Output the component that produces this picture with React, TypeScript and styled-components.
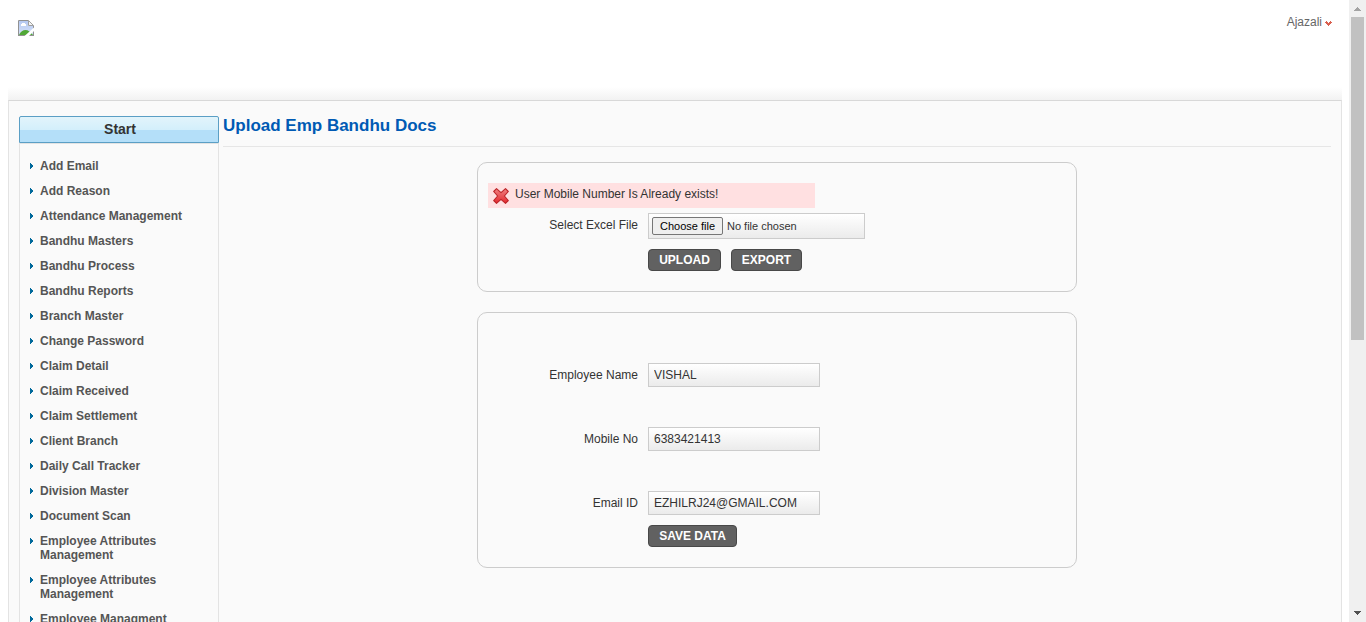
import React from "react";
import styled, { createGlobalStyle } from "styled-components";

const GlobalStyle = createGlobalStyle`
  * { box-sizing: border-box; }
  html, body { margin: 0; padding: 0; background: #fff; overflow: hidden; }
  body, input, button {
    font-family: "Liberation Sans", Arial, Helvetica, sans-serif;
    font-size: 12px;
  }
  body { color: #333; line-height: 14px; }
`;

const Window = styled.div`
  display: flex;
  height: 622px;
  overflow: hidden;
`;

const Page = styled.div`
  flex: 1;
  min-width: 0;
  display: flex;
  flex-direction: column;
  padding: 0 7px 0 8px;
`;

const Header = styled.header`
  flex: none;
  display: flex;
  justify-content: space-between;
  align-items: flex-start;
  height: 100px;
  padding: 15px 10px 0;
  background: linear-gradient(#fff, #f2f2f2) bottom / 100% 13px no-repeat;
`;

const Logo = styled.svg`
  display: block;
  margin-top: 5px;
`;

const UserMenu = styled.div`
  display: flex;
  align-items: center;
  gap: 3px;
  color: #666;

  svg { margin-top: 2px; }
`;

const Body = styled.div`
  flex: 1;
  min-height: 0;
  display: flex;
  gap: 4px;
  padding: 15px 10px 0;
  background: #fafafa;
  border: 1px solid #e3e3e3;
  border-top-color: #d8d8d8;
  border-bottom: 0;
`;

const Sidebar = styled.nav`
  flex: none;
  width: 200px;
  display: flex;
  flex-direction: column;
`;

const StartTitle = styled.div`
  flex: none;
  height: 27px;
  padding-left: 2px;
  border: 1px solid #5b9fc5;
  border-radius: 2px 2px 0 0;
  background: linear-gradient(#e2f4fb 0, #d3effb 13px, #b4dff9 13px, #b4dff9 100%);
  color: #333;
  font-size: 14px;
  font-weight: bold;
  line-height: 25px;
  text-align: center;
`;

const MenuList = styled.ul`
  flex: 1;
  display: flex;
  flex-direction: column;
  gap: 11px;
  margin: 0;
  padding: 15px 10px 0;
  list-style: none;
  border: 1px solid #e3e3e3;
  border-bottom: 0;
`;

const MenuItem = styled.li`
  flex: none;
  display: flex;
  align-items: flex-start;
  gap: 7px;
  color: #555;
  font-weight: bold;

  svg { flex: none; margin-top: 4px; }
`;

const Content = styled.main`
  flex: 1;
  min-width: 0;
`;

const Title = styled.h1`
  height: 31px;
  margin: 0 0 15px;
  border-bottom: 1px solid #e6e6e6;
  color: #005ab4;
  font-size: 17px;
  font-weight: bold;
  line-height: 19px;
`;

const Panel = styled.section<{ $height: number; $top: number }>`
  width: 600px;
  height: ${(p) => p.$height}px;
  margin: 0 auto 20px;
  padding: ${(p) => p.$top}px 10px 0;
  border: 1px solid #ccc;
  border-radius: 10px;
`;

const ErrorMessage = styled.div`
  display: flex;
  align-items: flex-start;
  gap: 6px;
  width: 327px;
  height: 25px;
  margin-bottom: 5px;
  padding: 4px 5px;
  background: #ffe0e1;

  svg { margin-top: 1px; }
`;

const Field = styled.div<{ $after: number }>`
  display: flex;
  gap: 10px;
  margin-bottom: ${(p) => p.$after}px;
`;

const Label = styled.label`
  width: 150px;
  padding-top: 5px;
  text-align: right;
`;

const inputBackground = "linear-gradient(#fff, #ebebeb)";

const TextInput = styled.input`
  width: 172px;
  height: 24px;
  padding: 0 5px;
  border: 1px solid #ccc;
  border-radius: 0;
  outline: none;
  background: ${inputBackground};
  color: #333;
`;

const FilePicker = styled.div`
  display: flex;
  align-items: center;
  gap: 4px;
  width: 217px;
  height: 26px;
  padding: 0 3px;
  border: 1px solid #ccc;
  background: ${inputBackground};
  font-size: 11px;
`;

const ChooseButton = styled.button`
  width: 71px;
  height: 18px;
  padding: 0;
  border: 1px solid #767676;
  border-radius: 2px;
  background: #efefef;
  color: #000;
  font-size: 11px;
  line-height: 16px;
`;

const Actions = styled.div`
  display: flex;
  gap: 10px;
  padding-left: 160px;
`;

const ActionButton = styled.button<{ $width: number }>`
  width: ${(p) => p.$width}px;
  height: 22px;
  padding: 0;
  border: 1px solid #484848;
  border-radius: 4px;
  background: #616161;
  color: #fff;
  font-weight: bold;
  line-height: 20px;
`;

const Scrollbar = styled.div`
  flex: none;
  display: flex;
  flex-direction: column;
  align-items: center;
  justify-content: space-between;
  width: 17px;
  background: #f0f0f0;
`;

const ScrollTop = styled.div`
  display: flex;
  flex-direction: column;
  align-items: center;
  gap: 6px;
  padding-top: 7px;

  svg { display: block; }
`;

const Thumb = styled.div`
  width: 13px;
  height: 323px;
  background: #c1c1c1;
`;

const ScrollDown = styled.svg`
  display: block;
  margin-bottom: 7px;
`;

const menu = [
  "Add Email",
  "Add Reason",
  "Attendance Management",
  "Bandhu Masters",
  "Bandhu Process",
  "Bandhu Reports",
  "Branch Master",
  "Change Password",
  "Claim Detail",
  "Claim Received",
  "Claim Settlement",
  "Client Branch",
  "Daily Call Tracker",
  "Division Master",
  "Document Scan",
  "Employee Attributes Management",
  "Employee Attributes Management",
  "Employee Managment",
];

const BrokenImage = () => (
  <Logo width="16" height="16" viewBox="0 0 16 16">
    <defs>
      <linearGradient id="sky" x1="0" y1="0" x2="0" y2="1">
        <stop offset="0" stopColor="#b5c9f2" />
        <stop offset="1" stopColor="#d5e1f9" />
      </linearGradient>
    </defs>
    <path d="M.5 .5h10l5 5v10H.5z" fill="#fff" />
    <path d="M1 1h9v5h5v9H1z" fill="url(#sky)" />
    <path d="M3 6V4h1V3h3v1h1v2z" fill="#fff" />
    <path d="M1 15c1.500-3.500 4-5 6.500-5S13 12 15 15z" fill="#51a837" />
    <path d="M15.500 5.500V16M.5 16V.5h10M0 15.500h16" fill="none" stroke="#929292" />
    <path d="M10.500 .5l5 5h-5z" fill="#f4f4f4" stroke="#a0a0a0" />
    <path d="M6.500 16L16 7.500v3.500L11 16z" fill="#fff" />
  </Logo>
);

const Cross = () => (
  <svg width="16" height="16" viewBox="0 0 16 16">
    <defs>
      <linearGradient id="cross" x1="0" y1="0" x2="0" y2="1">
        <stop offset="0" stopColor="#f08080" />
        <stop offset=".5" stopColor="#e85558" />
        <stop offset="1" stopColor="#e6282e" />
      </linearGradient>
    </defs>
    <path
      d="M3.500 .7L8 4.600 12.500 .7 15.300 3.500 11.400 8l3.900 4.500-2.800 2.800L8 11.400l-4.500 3.900-2.800-2.800L4.600 8 .7 3.500z"
      fill="url(#cross)"
      stroke="#bb2226"
      strokeWidth="1.100"
      strokeLinejoin="round"
    />
  </svg>
);

export default function App() {
  return (
    <>
      <GlobalStyle />
      <Window>
        <Page>
          <Header>
            <BrokenImage />
            <UserMenu>
              Ajazali
              <svg width="7" height="5" viewBox="0 0 7 5" shapeRendering="crispEdges">
                <path d="M1 0h1v1h1v1h1V1h1V0h1v1h1v1H6v1H5v1H4v1H3V4H2V3H1V2H0V1h1z" fill="#d9604f" />
              </svg>
            </UserMenu>
          </Header>
          <Body>
            <Sidebar>
              <StartTitle>Start</StartTitle>
              <MenuList>
                {menu.map((name, i) => (
                  <MenuItem key={i}>
                    <svg width="3" height="6" viewBox="0 0 3 6" shapeRendering="crispEdges">
                      <path d="M0 0h1v1h1v1h1v2H2v1H1v1H0z" fill="#00699b" />
                    </svg>
                    {name}
                  </MenuItem>
                ))}
              </MenuList>
            </Sidebar>
            <Content>
              <Title>Upload Emp Bandhu Docs</Title>
              <Panel $height={130} $top={20}>
                <ErrorMessage>
                  <Cross />
                  User Mobile Number Is Already exists!
                </ErrorMessage>
                <Field $after={10}>
                  <Label>Select Excel File</Label>
                  <FilePicker>
                    <ChooseButton type="button">Choose file</ChooseButton>
                    No file chosen
                  </FilePicker>
                </Field>
                <Actions>
                  <ActionButton $width={73}>UPLOAD</ActionButton>
                  <ActionButton $width={71}>EXPORT</ActionButton>
                </Actions>
              </Panel>
              <Panel $height={256} $top={50}>
                <Field $after={40}>
                  <Label>Employee Name</Label>
                  <TextInput defaultValue="VISHAL" />
                </Field>
                <Field $after={40}>
                  <Label>Mobile No</Label>
                  <TextInput defaultValue="6383421413" />
                </Field>
                <Field $after={10}>
                  <Label>Email ID</Label>
                  <TextInput defaultValue="EZHILRJ24@GMAIL.COM" />
                </Field>
                <Actions>
                  <ActionButton $width={89}>SAVE DATA</ActionButton>
                </Actions>
              </Panel>
            </Content>
          </Body>
        </Page>
        <Scrollbar>
          <ScrollTop>
            <svg width="7" height="4" viewBox="0 0 7 4" shapeRendering="crispEdges">
              <path d="M3 0h1v1h1v1h1v1h1v1H0V3h1V2h1V1h1z" fill="#a3a3a3" />
            </svg>
            <Thumb />
          </ScrollTop>
          <ScrollDown width="7" height="4" viewBox="0 0 7 4" shapeRendering="crispEdges">
            <path d="M0 0h7v1H6v1H5v1H4v1H3V3H2V2H1V1H0z" fill="#505050" />
          </ScrollDown>
        </Scrollbar>
      </Window>
    </>
  );
}
